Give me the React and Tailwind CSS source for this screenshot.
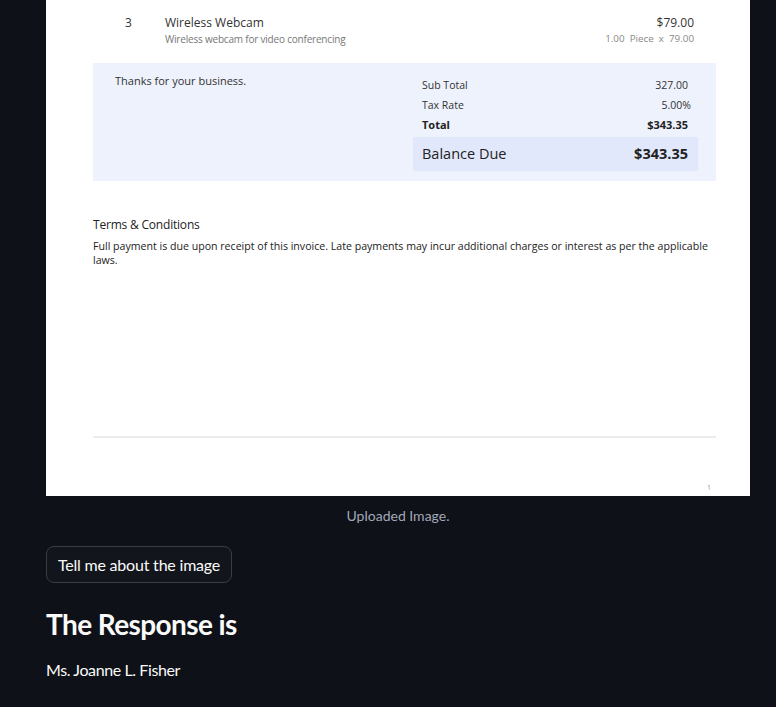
export default function App() {
  const inv = { fontFamily: '"Open Sans", "Noto Sans", sans-serif' };
  const st = { fontFamily: 'Lato, "Noto Sans", sans-serif' };
  return (
    <div className="min-h-[707px] w-[776px] bg-[#0e1117] overflow-hidden" style={st}>
      <div className="px-[46px]">
        <div className="w-[704px] h-[496px] bg-white relative" style={inv}>
          <div className="pl-[79px] pr-[56px] pt-[15px] flex">
            <div className="w-[40px] text-[12px] leading-[16px] text-[#333]">3</div>
            <div className="flex-1">
              <div className="text-[12px] leading-[16px] text-[#333]">Wireless Webcam</div>
              <div className="text-[10px] leading-[16px] text-[#777] tracking-[-0.2px]">Wireless webcam for video conferencing</div>
            </div>
            <div className="text-right">
              <div className="text-[12px] leading-[16px] text-[#333]">$79.00</div>
              <div className="text-[9.8px] leading-[16px] text-[#888] whitespace-pre">1.00  Piece  x  79.00</div>
            </div>
          </div>
          <div className="ml-[47px] mr-[34px] mt-[16px] h-[118px] bg-[#eef2fd] flex">
            <div className="flex-1 pl-[22px] pt-[10px] text-[11px] leading-[16px] text-[#333]">Thanks for your business.</div>
            <div className="w-[285px] mr-[18px] pt-[11px]">
              <div className="flex justify-between px-[9px] text-[10.5px] leading-[16px] text-[#333] h-[21px] items-center">
                <span>Sub Total</span><span className="pr-[1px]">327.00</span>
              </div>
              <div className="flex justify-between px-[9px] text-[10.5px] leading-[16px] text-[#333] h-[20px] items-center">
                <span>Tax Rate</span><span className="-mr-[2px]">5.00%</span>
              </div>
              <div className="flex justify-between px-[9px] text-[11px] leading-[16px] text-[#222] font-bold h-[19px] items-center">
                <span>Total</span><span className="pr-[1px]">$343.35</span>
              </div>
              <div className="flex justify-between items-center h-[34px] mt-[3px] bg-[#e2e8fb] px-[9px] text-[14.5px] text-[#222]">
                <span>Balance Due</span><span className="font-bold pr-[1px]">$343.35</span>
              </div>
            </div>
          </div>
          <div className="mx-[47px] mt-[36px] text-[12px] leading-[16px] text-[#222] tracking-[-0.2px]">Terms &amp; Conditions</div>
          <div className="ml-[47px] mr-[34px] mt-[6px] text-[10.6px] leading-[14px] text-[#222]">
            Full payment is due upon receipt of this invoice. Late payments may incur additional charges or interest as per the applicable laws.
          </div>
          <div className="ml-[47px] mr-[34px] mt-[169px] h-[2px] bg-[#ececec]"></div>
          <div className="absolute right-[39px] bottom-[3px] text-[7px] text-[#999]">1</div>
        </div>
        <div className="w-[704px] text-center text-[14px] leading-[20px] text-[#a3a8b8] mt-[10px]">Uploaded Image.</div>
        <button className="mt-[20px] h-[37px] w-[186px] rounded-lg border border-[#3a3d47] bg-[#12151c] text-[16px] text-[#fafafa] tracking-[-0.2px] flex items-center justify-center">
          Tell me about the image
        </button>
        <div className="mt-[23px] text-[28px] leading-[36px] font-bold text-[#fafafa] tracking-[-0.6px]">The Response is</div>
        <div className="mt-[16px] text-[16px] leading-[24px] text-[#fafafa] tracking-[-0.4px]">Ms. Joanne L. Fisher</div>
      </div>
    </div>
  );
}
